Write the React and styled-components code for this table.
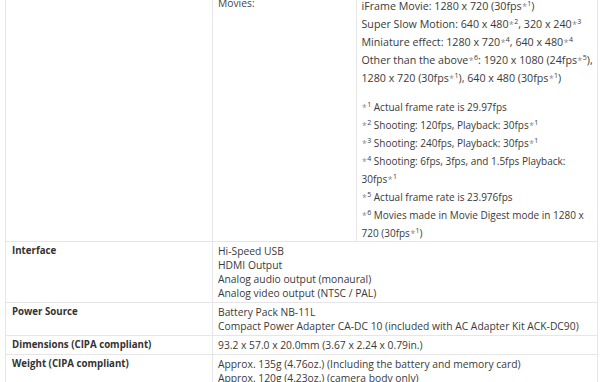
import React from 'react';
import styled, { createGlobalStyle } from 'styled-components';

const GlobalStyle = createGlobalStyle`
    html, body { margin:0; padding:0; background:#fff; }
    body { font-family:"Open Sans", "Liberation Sans", sans-serif; font-size:10.3px; color:#333; overflow:hidden; }
`;

const specs = [
    { label: "Interface", lines: ["Hi-Speed USB", "HDMI Output", "Analog audio output (monaural)", "Analog video output (NTSC / PAL)"] },
    { label: "Power Source", lines: ["Battery Pack NB-11L", "Compact Power Adapter CA-DC 10 (included with AC Adapter Kit ACK-DC90)"] },
    { label: "Dimensions (CIPA compliant)", lines: ["93.2 x 57.0 x 20.0mm (3.67 x 2.24 x 0.79in.)"] },
    { label: "Weight (CIPA compliant)", lines: ["Approx. 135g (4.76oz.) (Including the battery and memory card)", "Approx. 120g (4.23oz.) (camera body only)"] },
];

// footnote mark: grey asterisk + raised number
const Note = ({ n }) => <><Star>*</Star><Sup>{n}</Sup></>;

function App () {
    return (
        <>
            <GlobalStyle />
            <Page>
                <Table>
                    <colgroup>
                        <col style={{ width: 207 }} />
                        <col />
                    </colgroup>
                    <tbody>
                        <Row>
                            <Label></Label>
                            <Value flush>
                                <Inner>
                                    <colgroup>
                                        <col style={{ width: 143 }} />
                                        <col />
                                    </colgroup>
                                    <tbody>
                                        <tr>
                                            <InnerLabel>Movies:</InnerLabel>
                                            <InnerValue>
                                                <Lines>
                                                    <Line big>iFrame Movie: 1280 x 720 (30fps<Note n="1" />)</Line>
                                                    <Line big>Super Slow Motion: 640 x 480<Note n="2" />, 320 x 240<Note n="3" /></Line>
                                                    <Line big>Miniature effect: 1280 x 720<Note n="4" />, 640 x 480<Note n="4" /></Line>
                                                    <Line big>Other than the above<Note n="6" />: 1920 x 1080 (24fps<Note n="5" />),</Line>
                                                    <Line big>1280 x 720 (30fps<Note n="1" />), 640 x 480 (30fps<Note n="1" />)</Line>
                                                    <Blank />
                                                    <Line><Note n="1" /> Actual frame rate is 29.97fps</Line>
                                                    <Line><Note n="2" /> Shooting: 120fps, Playback: 30fps<Note n="1" /></Line>
                                                    <Line><Note n="3" /> Shooting: 240fps, Playback: 30fps<Note n="1" /></Line>
                                                    <Line><Note n="4" /> Shooting: 6fps, 3fps, and 1.5fps Playback:</Line>
                                                    <Line>30fps<Note n="1" /></Line>
                                                    <Line><Note n="5" /> Actual frame rate is 23.976fps</Line>
                                                    <Line><Note n="6" /> Movies made in Movie Digest mode in 1280 x</Line>
                                                    <Line>720 (30fps<Note n="1" />)</Line>
                                                </Lines>
                                            </InnerValue>
                                        </tr>
                                    </tbody>
                                </Inner>
                            </Value>
                        </Row>
                        {specs.map((s) => (
                            <Row key={s.label}>
                                <Label>{s.label}</Label>
                                <Value>
                                    {s.lines.map((l) => <Text key={l}>{l}</Text>)}
                                </Value>
                            </Row>
                        ))}
                    </tbody>
                </Table>
            </Page>
        </>
    )
};

const Page = styled.div`
    width:600px; height:382px;
    overflow:hidden;
    padding-left:5px;
    box-sizing:border-box;
`;

const Table = styled.table`
    width:593px;
    margin-top:-10px;
    border-collapse:collapse;
    table-layout:fixed;
`;

const Row = styled.tr`
    border:1px solid #e6e6e6;
`;

const Label = styled.td`
    border:1px solid #e6e6e6;
    padding:2px 6px;
    vertical-align:top;
    font-weight:bold;
    font-size:9.7px;
    line-height:14px;
    color:#333;
`;

const Value = styled.td`
    border:1px solid #e6e6e6;
    padding:${(p) => (p.flush ? '0' : '2px 5px')};
    vertical-align:top;
    line-height:14px;
    color:#3a3a3a;
`;

const Text = styled.div`
    white-space:nowrap;
`;

const Inner = styled.table`
    width:100%;
    border-collapse:collapse;
    table-layout:fixed;
`;

const InnerLabel = styled.td`
    padding:5px 5px 0;
    vertical-align:top;
    line-height:14px;
    color:#444;
    border-right:1px solid #e6e6e6;
`;

const InnerValue = styled.td`
    padding:0 5px;
    vertical-align:top;
    color:#3a3a3a;
`;

const Lines = styled.div`
    padding-top:6px;
    margin-bottom:-1px;
`;

const Line = styled.div`
    height:18px;
    font-size:${(p) => (p.big ? '10.7px' : '10px')};
    line-height:18px;
    white-space:nowrap;
`;

const Blank = styled.div`
    height:11px;
`;

const Star = styled.span`
    color:#8a8a8a;
    font-size:8.5px;
    margin-left:0.5px;
`;

const Sup = styled.sup`
    font-size:7px;
    line-height:0;
    vertical-align:4px;
    margin-left:0.5px;
`;

export default App;
